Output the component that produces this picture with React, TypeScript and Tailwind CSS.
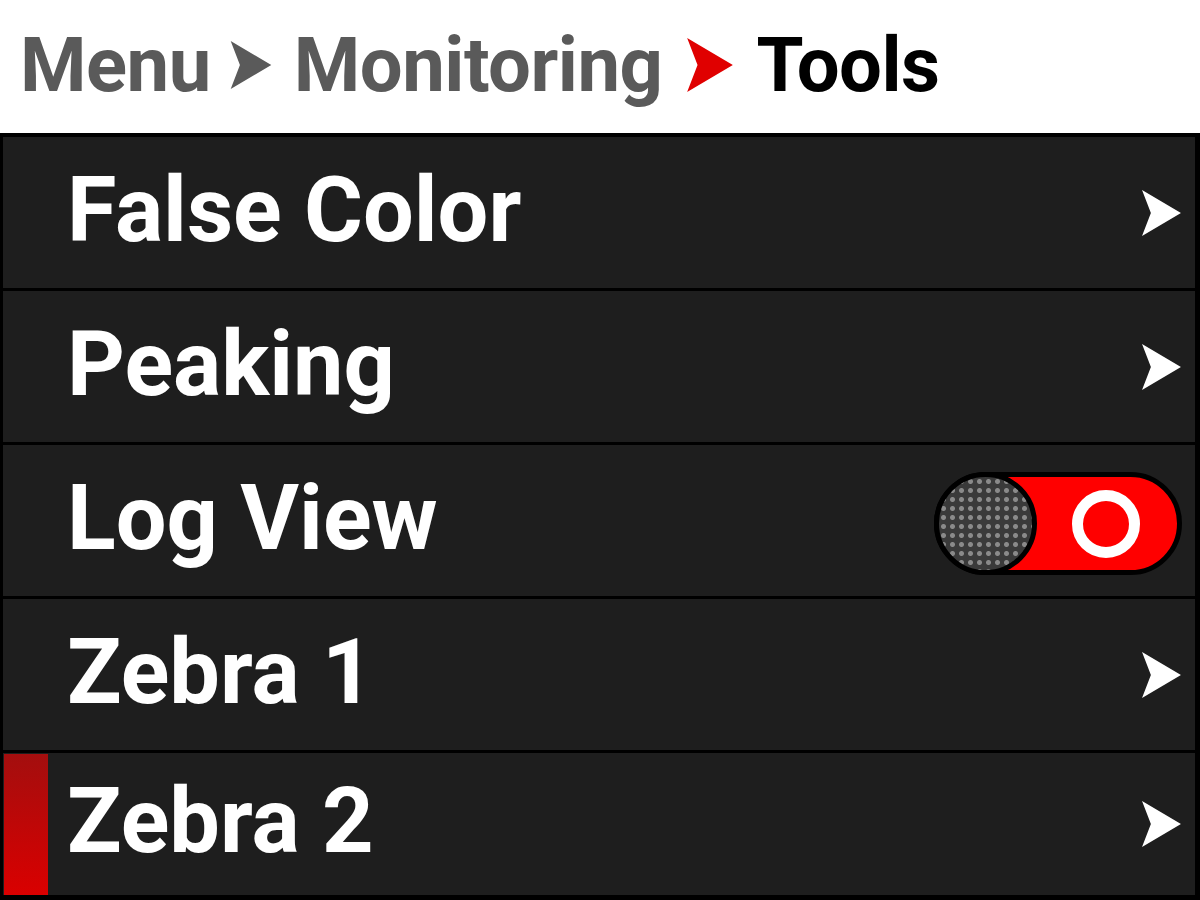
import React from "react"

const font = { fontFamily: "Roboto, 'Liberation Sans', sans-serif" }

function Chevron({ className }: { className: string }) {
  return (
    <svg viewBox="0 0 44 52" className={className} fill="currentColor">
      <path d="M0 0 L44 26 L0 52 L10 26 Z" />
    </svg>
  )
}

function Toggle() {
  return (
    <div className="flex items-center w-[248px] h-[103px] rounded-full bg-[#ff0000] border-[5px] border-black">
      <div className="h-[103px] w-[103px] -ml-[5px] shrink-0 rounded-full border-[5px] border-black bg-[#3a3a3a] bg-[radial-gradient(circle,#8a8a8a_2px,transparent_3px)] bg-[length:9px_9px]" />
      <div className="flex-1 flex items-center justify-center pr-[2px]">
        <div className="w-[68px] h-[68px] rounded-full border-[11px] border-white" />
      </div>
    </div>
  )
}

const rows = [
  { label: "False Color", kind: "link" },
  { label: "Peaking", kind: "link" },
  { label: "Log View", kind: "toggle" },
  { label: "Zebra 1", kind: "link" },
  { label: "Zebra 2", kind: "link", selected: true },
]

export default function App() {
  return (
    <div className="w-[1200px] h-[900px] bg-white flex flex-col overflow-hidden" style={font}>
      {/* Breadcrumb */}
      <div className="h-[133px] shrink-0 flex items-center pl-[20px] pb-[4px] text-[76px] font-bold tracking-[-0.5px]">
        <span className="text-[#5a5a5a]">Menu</span>
        <Chevron className="w-[42px] h-[48px] ml-[19px] mr-[22px] text-[#5a5a5a]" />
        <span className="text-[#5a5a5a]">Monitoring</span>
        <Chevron className="w-[46px] h-[54px] ml-[24px] mr-[24px] text-[#e00000]" />
        <span className="text-black">Tools</span>
      </div>

      {/* Menu list */}
      <div className="flex-1 flex flex-col gap-[3px] bg-black pt-[4px] pl-[3px] pr-[5px] pb-[5px]">
        {rows.map((row, i) => (
          <div
            key={row.label}
            className={`flex items-center bg-[#1e1e1e] relative ${i === rows.length - 1 ? "flex-1" : "h-[151px] shrink-0"}`}
          >
            {row.selected && (
              <div className="absolute left-[1px] top-[1px] bottom-0 w-[44px] bg-[linear-gradient(to_bottom,#a30e0e,#da0000)]" />
            )}
            <span className="pl-[64px] flex-1 text-white font-bold text-[90px] leading-none pb-[4px]">
              {row.label}
            </span>
            {row.kind === "link" ? (
              <Chevron className="w-[43px] h-[46px] mr-[12px] text-white" />
            ) : (
              <div className="mr-[13px] mt-[6px]">
                <Toggle />
              </div>
            )}
          </div>
        ))}
      </div>
    </div>
  )
}
